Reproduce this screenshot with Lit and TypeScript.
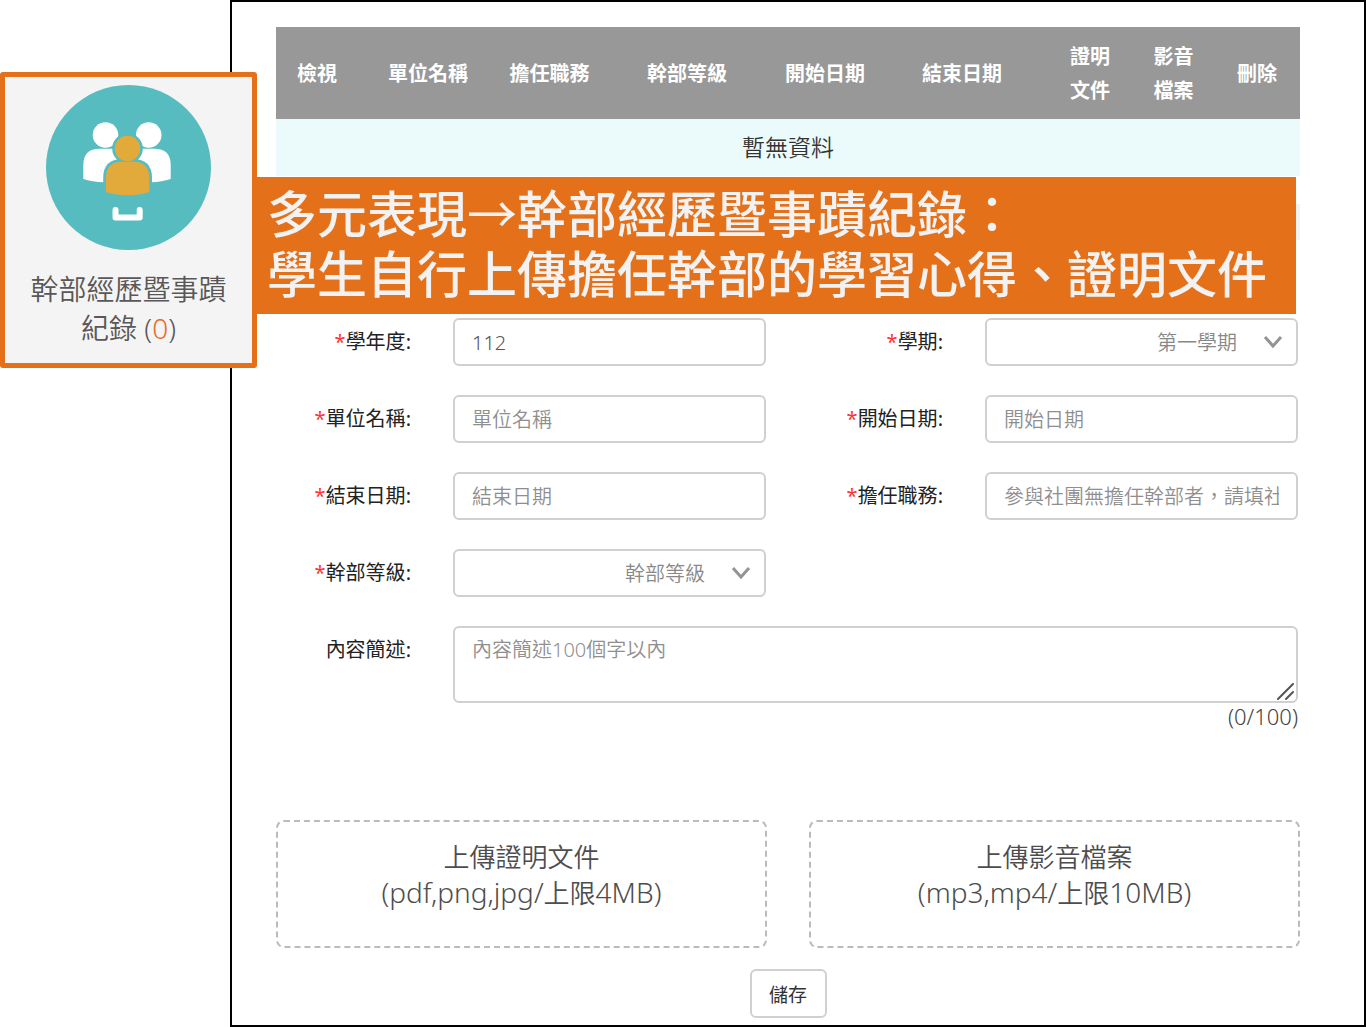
import { LitElement, html, css, svg, nothing } from "lit";
import { customElement, property, state } from "lit/decorators.js";

const chevron = svg`<path d="M2 3 L10 12 L18 3" fill="none" stroke="#949494" stroke-width="3"/>`;

@customElement("category-card")
export class CategoryCard extends LitElement {
  @property({ type: Number }) count = 0;

  static styles = css`
    :host { display: block; }
    .card {
      display: flex;
      flex-direction: column;
      align-items: center;
      box-sizing: border-box;
      padding: 8px 20px 15px;
      border: 5px solid #e4711a;
      border-radius: 3px;
      background: #f4f4f4;
      color: #595757;
      text-decoration: none;
    }
    .badge { display: block; width: 165px; height: 165px; }
    .name {
      margin-top: 20px;
      font-size: 28px;
      line-height: 39px;
      font-weight: 350;
      text-align: center;
    }
    .count { color: #ea6a2a; }
  `;

  render() {
    return html`
      <a class="card" href="#records">
        <svg class="badge" viewBox="0 0 165 165" aria-hidden="true">
          <circle cx="82.5" cy="82.5" r="82.5" fill="#57bcc0" />
          <g fill="#fff">
            <circle cx="59.5" cy="50" r="12.8" />
            <circle cx="102.7" cy="50" r="12.8" />
            <path d="M37.3 94V80q0-16.3 16.3-16.3H75V97.2H58Q46 97 37.3 94Z" />
            <path d="M124.7 94V80q0-16.3-16.3-16.3H87V97.2H105Q116 97 124.7 94Z" />
          </g>
          <g fill="#57bcc0">
            <path d="M57.2 110V93q0-19 19-19H87q19 0 19 19V110Z" />
            <circle cx="81.5" cy="63.5" r="15.3" />
          </g>
          <g fill="#e2a93b">
            <path d="M60 107V93q0-16.3 16-16.3H87.3q16 0 16 16.3V107Q93 110.3 81.7 110.3Q70 110.3 60 107Z" />
            <circle cx="81.5" cy="63.5" r="12.7" />
          </g>
          <path d="M69.5 125V132.5H93.7V125" fill="none" stroke="#fff" stroke-width="6"
            stroke-linecap="round" stroke-linejoin="round" />
        </svg>
        <span class="name">幹部經歷暨事蹟<br />紀錄 (<span class="count">${this.count}</span>)</span>
      </a>
    `;
  }
}

@customElement("record-table")
export class RecordTable extends LitElement {
  static styles = css`
    :host { display: block; }
    .table {
      width: 100%;
      table-layout: fixed;
      border-collapse: collapse;
    }
    .head {
      height: 90px;
      padding: 2px 0 0;
      background: #989898;
      color: #fff;
      font-size: 20px;
      line-height: 34px;
      font-weight: 700;
      text-align: center;
    }
    .empty {
      height: 53px;
      padding: 0 0 4px;
      background: #ebfbfb;
      color: #333;
      font-size: 23px;
      font-weight: 350;
      text-align: center;
    }
  `;

  private columns = [
    { lines: ["檢視"], width: 82 },
    { lines: ["單位名稱"], width: 140 },
    { lines: ["擔任職務"], width: 103 },
    { lines: ["幹部等級"], width: 172 },
    { lines: ["開始日期"], width: 104 },
    { lines: ["結束日期"], width: 170 },
    { lines: ["證明", "文件"], width: 86 },
    { lines: ["影音", "檔案"], width: 81 },
    { lines: ["刪除"], width: 86 },
  ];

  render() {
    return html`
      <table class="table">
        <colgroup>
          ${this.columns.map((c) => html`<col style="width:${c.width}px" />`)}
        </colgroup>
        <thead>
          <tr>
            ${this.columns.map(
              (c) => html`<th class="head" scope="col">${c.lines.map((t, i) => html`${i ? html`<br />` : nothing}${t}`)}</th>`
            )}
          </tr>
        </thead>
        <tbody>
          <tr><td class="empty" colspan="9">暫無資料</td></tr>
        </tbody>
      </table>
    `;
  }
}

@customElement("record-form")
export class RecordForm extends LitElement {
  @state() private length = 0;

  static styles = css`
    :host { display: block; }
    .fields {
      display: grid;
      grid-template-columns: 135px minmax(0, 1fr) 135px minmax(0, 1fr);
      column-gap: 42px;
      row-gap: 29px;
      padding-right: 2px;
    }
    .label {
      color: #222;
      font-size: 20px;
      line-height: 48px;
      text-align: right;
      white-space: nowrap;
    }
    .star { color: #f33; }
    .control {
      display: block;
      box-sizing: border-box;
      width: 100%;
      height: 48px;
      margin: 0;
      padding: 1px 17px 0;
      border: 2px solid #d0d0d0;
      border-radius: 6px;
      background: #fff;
      color: #555;
      font-family: inherit;
      font-size: 20px;
      font-weight: 350;
      outline: none;
    }
    .control::placeholder { color: #8f8f8f; opacity: 1; }
    .wrap { position: relative; }
    .select {
      appearance: none;
      padding: 0 59px 0 17px;
      color: #888;
      text-align: right;
      text-align-last: right;
    }
    .chevron {
      position: absolute;
      right: 15px;
      top: 16px;
      width: 20px;
      height: 15px;
      pointer-events: none;
    }
    .wide { grid-column: 2 / -1; }
    .area {
      height: 77px;
      padding: 8px 17px;
      line-height: 28px;
      resize: vertical;
    }
    .area::-webkit-resizer { background: transparent; }
    .grip {
      position: absolute;
      right: 3px;
      bottom: 2px;
      width: 18px;
      height: 18px;
      pointer-events: none;
    }
    .counter {
      display: block;
      color: #444;
      font-size: 22px;
      line-height: 26px;
      font-weight: 350;
      text-align: right;
    }
    .uploads {
      display: grid;
      grid-template-columns: 1fr 1fr;
      gap: 42px;
      margin-top: 91px;
    }
    .upload {
      box-sizing: border-box;
      min-height: 128px;
      margin: 0;
      padding: 0 20px 18px;
      border: 2px dashed #bbb;
      border-radius: 8px;
      background: #fff;
      color: #4d4d4d;
      font-family: inherit;
      font-size: 26px;
      line-height: 35px;
      font-weight: 350;
    }
    .latin { font-size: 28px; }
    .actions { display: flex; justify-content: center; margin-top: 21px; }
    .save {
      box-sizing: border-box;
      width: 77px;
      height: 49px;
      padding: 0;
      border: 2px solid #d0d0d0;
      border-radius: 6px;
      background: #fff;
      color: #333;
      font-family: inherit;
      font-size: 19px;
      font-weight: 400;
    }
  `;

  private label(id: string, text: string, required = true) {
    return html`<label class="label" for=${id}>${required ? html`<span class="star">*</span>` : nothing}${text}:</label>`;
  }

  private select(id: string, value: string) {
    return html`
      <div class="wrap">
        <select class="control select" id=${id}><option>${value}</option></select>
        <svg class="chevron" viewBox="0 0 20 15" aria-hidden="true">${chevron}</svg>
      </div>
    `;
  }

  private upload(title: string, types: string, size: string) {
    return html`<button class="upload" type="button">${title}<br /><span class="latin">(${types}/</span>上限<span class="latin">${size})</span></button>`;
  }

  private onInput(e: Event) {
    this.length = (e.target as HTMLTextAreaElement).value.length;
  }

  render() {
    return html`
      <form @submit=${(e: Event) => e.preventDefault()}>
        <div class="fields">
          ${this.label("year", "學年度")}
          <input class="control" id="year" type="text" .value=${"112"} />
          ${this.label("term", "學期")} ${this.select("term", "第一學期")}
          ${this.label("unit", "單位名稱")}
          <input class="control" id="unit" type="text" placeholder="單位名稱" />
          ${this.label("start", "開始日期")}
          <input class="control" id="start" type="text" placeholder="開始日期" />
          ${this.label("end", "結束日期")}
          <input class="control" id="end" type="text" placeholder="結束日期" />
          ${this.label("duty", "擔任職務")}
          <input class="control" id="duty" type="text" placeholder="參與社團無擔任幹部者，請填社員" />
          ${this.label("level", "幹部等級")} ${this.select("level", "幹部等級")}
          <span></span><span></span>
          ${this.label("summary", "內容簡述", false)}
          <div class="wide">
            <div class="wrap">
              <textarea class="control area" id="summary" maxlength="100"
                placeholder="內容簡述100個字以內" @input=${this.onInput}></textarea>
              <svg class="grip" viewBox="0 0 18 18" aria-hidden="true">
                <path d="M1 16 L16 1 M9 16 L16 9" fill="none" stroke="#555" stroke-width="2"
                  stroke-linecap="round" />
              </svg>
            </div>
            <output class="counter" for="summary">(${this.length}/100)</output>
          </div>
        </div>
        <div class="uploads">
          ${this.upload("上傳證明文件", "pdf,png,jpg", "4MB")}
          ${this.upload("上傳影音檔案", "mp3,mp4", "10MB")}
        </div>
        <div class="actions"><button class="save" type="submit">儲存</button></div>
      </form>
    `;
  }
}

@customElement("app-root")
export class AppRoot extends LitElement {
  static styles = css`
    :host {
      display: block;
      position: relative;
      background: #fff;
      font-family: "Noto Sans", "Noto Sans CJK TC", sans-serif;
    }
    .panel {
      box-sizing: border-box;
      min-height: 100vh;
      margin-left: 230px;
      padding: 25px 64px 7px 44px;
      border: 2px solid #000;
      background: #fff;
    }
    .bar { height: 36px; margin: 28px 0 78px; background: #f2f2f2; }
    .card { position: absolute; left: 0; top: 72px; width: 257px; }
    .banner {
      position: absolute;
      left: 257px;
      right: 70px;
      top: 177px;
      margin: 0;
      padding: 9px 10px 8px;
      background: #e4711a;
      color: #f2f2f2;
      font-family: "Liberation Sans", "Noto Sans CJK TC", sans-serif;
      font-size: 50px;
      line-height: 60px;
      font-weight: 500;
      white-space: nowrap;
    }
    .arrow {
      font-family: "Noto Sans CJK TC", sans-serif;
      font-weight: 400;
      line-height: 1px;
    }
  `;

  render() {
    return html`
      <main class="panel">
        <record-table></record-table>
        <div class="bar"></div>
        <record-form></record-form>
      </main>
      <category-card class="card"></category-card>
      <h1 class="banner">多元表現<span class="arrow">→</span>幹部經歷暨事蹟紀錄：<br />學生自行上傳擔任幹部的學習心得、證明文件</h1>
    `;
  }
}
